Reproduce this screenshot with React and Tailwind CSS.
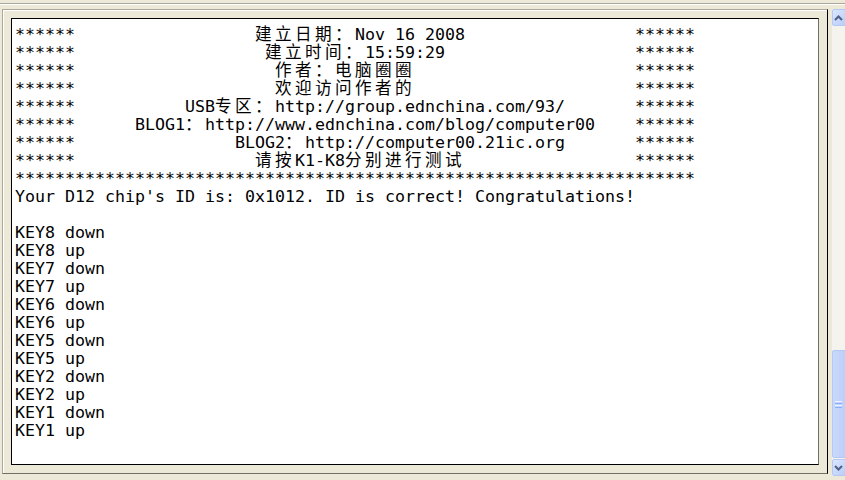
import React from 'react';

const isWide = (ch) => ch.charCodeAt(0) > 0x2e80;
const colWidth = (s) => [...s].reduce((w, c) => w + (isWide(c) ? 2 : 1), 0);

// header rows: stars on both edges, text placed at a fixed column
const row = (col, text) =>
  '******' + ' '.repeat(col - 6) + text + ' '.repeat(62 - col - colWidth(text)) + '******';

const lines = [
  row(24, '建立日期：Nov 16 2008'),
  row(25, '建立时间：15:59:29'),
  row(26, '作者：电脑圈圈'),
  row(26, '欢迎访问作者的'),
  row(17, 'USB专区：http://group.ednchina.com/93/'),
  row(12, 'BLOG1：http://www.ednchina.com/blog/computer00'),
  row(22, 'BLOG2：http://computer00.21ic.org'),
  row(24, '请按K1-K8分别进行测试'),
  '*'.repeat(68),
  "Your D12 chip's ID is: 0x1012. ID is correct! Congratulations!",
  '',
  'KEY8 down',
  'KEY8 up',
  'KEY7 down',
  'KEY7 up',
  'KEY6 down',
  'KEY6 up',
  'KEY5 down',
  'KEY5 up',
  'KEY2 down',
  'KEY2 up',
  'KEY1 down',
  'KEY1 up',
];

function Line({ text }) {
  const parts = [];
  let run = '';
  [...text].forEach((ch, i) => {
    if (isWide(ch)) {
      if (run) parts.push(run);
      run = '';
      parts.push(
        <span key={i} className="inline-block w-[20px]">
          {ch}
        </span>
      );
    } else {
      run += ch;
    }
  });
  if (run) parts.push(run);
  return <div className="h-[18px] whitespace-pre">{parts}</div>;
}

function Chevron({ up }) {
  return (
    <svg width="9" height="6" viewBox="0 0 9 6">
      <polyline
        points={up ? '1,5 4.5,1.5 8,5' : '1,1 4.5,4.5 8,1'}
        fill="none"
        stroke="#4D6185"
        strokeWidth="2"
      />
    </svg>
  );
}

function ScrollButton({ up }) {
  return (
    <div className="h-[17px] w-[17px] rounded-[2px] border border-[#B4C8F6] bg-gradient-to-br from-[#DCE6FD] to-[#B6CAF7] flex items-center justify-center pr-[4px]">
      <Chevron up={up} />
    </div>
  );
}

export default function App() {
  return (
    <div className="w-[845px] h-[480px] bg-[#ECE9D8] overflow-hidden">
      <div className="mt-[3px] border-t border-[#ACA899]">
        <div className="border-t border-white" />
      </div>

      <div className="flex mt-[4px]">
        <div className="ml-[2px] shrink-0 w-[826px] h-[465px] border-t border-l border-[#ACA899] border-r border-r-black border-b border-b-[#716F64]">
          <div className="h-full border-t border-l border-white">
            <div className="mt-[7px] ml-[7px] w-[808px] h-[447px] border border-black border-r-[#716F64] bg-white pl-[3px] pt-[7px] text-black text-[16.61px] leading-[18px] font-['DejaVu_Sans_Mono','Noto_Sans_CJK_SC',monospace]">
              {lines.map((t, i) => (
                <Line key={i} text={t} />
              ))}
            </div>
          </div>
        </div>

        <div className="ml-[4px] w-[17px] h-[467px] flex flex-col shrink-0 bg-[#F4F3EE]">
          <ScrollButton up />
          <div className="flex-1" />
          <div className="h-[108px] w-[17px] rounded-[2px] border border-[#B4C8F6] bg-gradient-to-r from-[#C9D8FC] to-[#BACDF8] flex flex-col items-center justify-center gap-[1px] pr-[4px]">
            <div className="w-[7px] h-[1px] bg-[#EEF4FE]" />
            <div className="w-[7px] h-[1px] bg-[#8CB0F8]" />
            <div className="w-[7px] h-[1px] bg-[#EEF4FE]" />
            <div className="w-[7px] h-[1px] bg-[#8CB0F8]" />
          </div>
          <div className="h-[1px]" />
          <ScrollButton />
        </div>
      </div>
    </div>
  );
}
